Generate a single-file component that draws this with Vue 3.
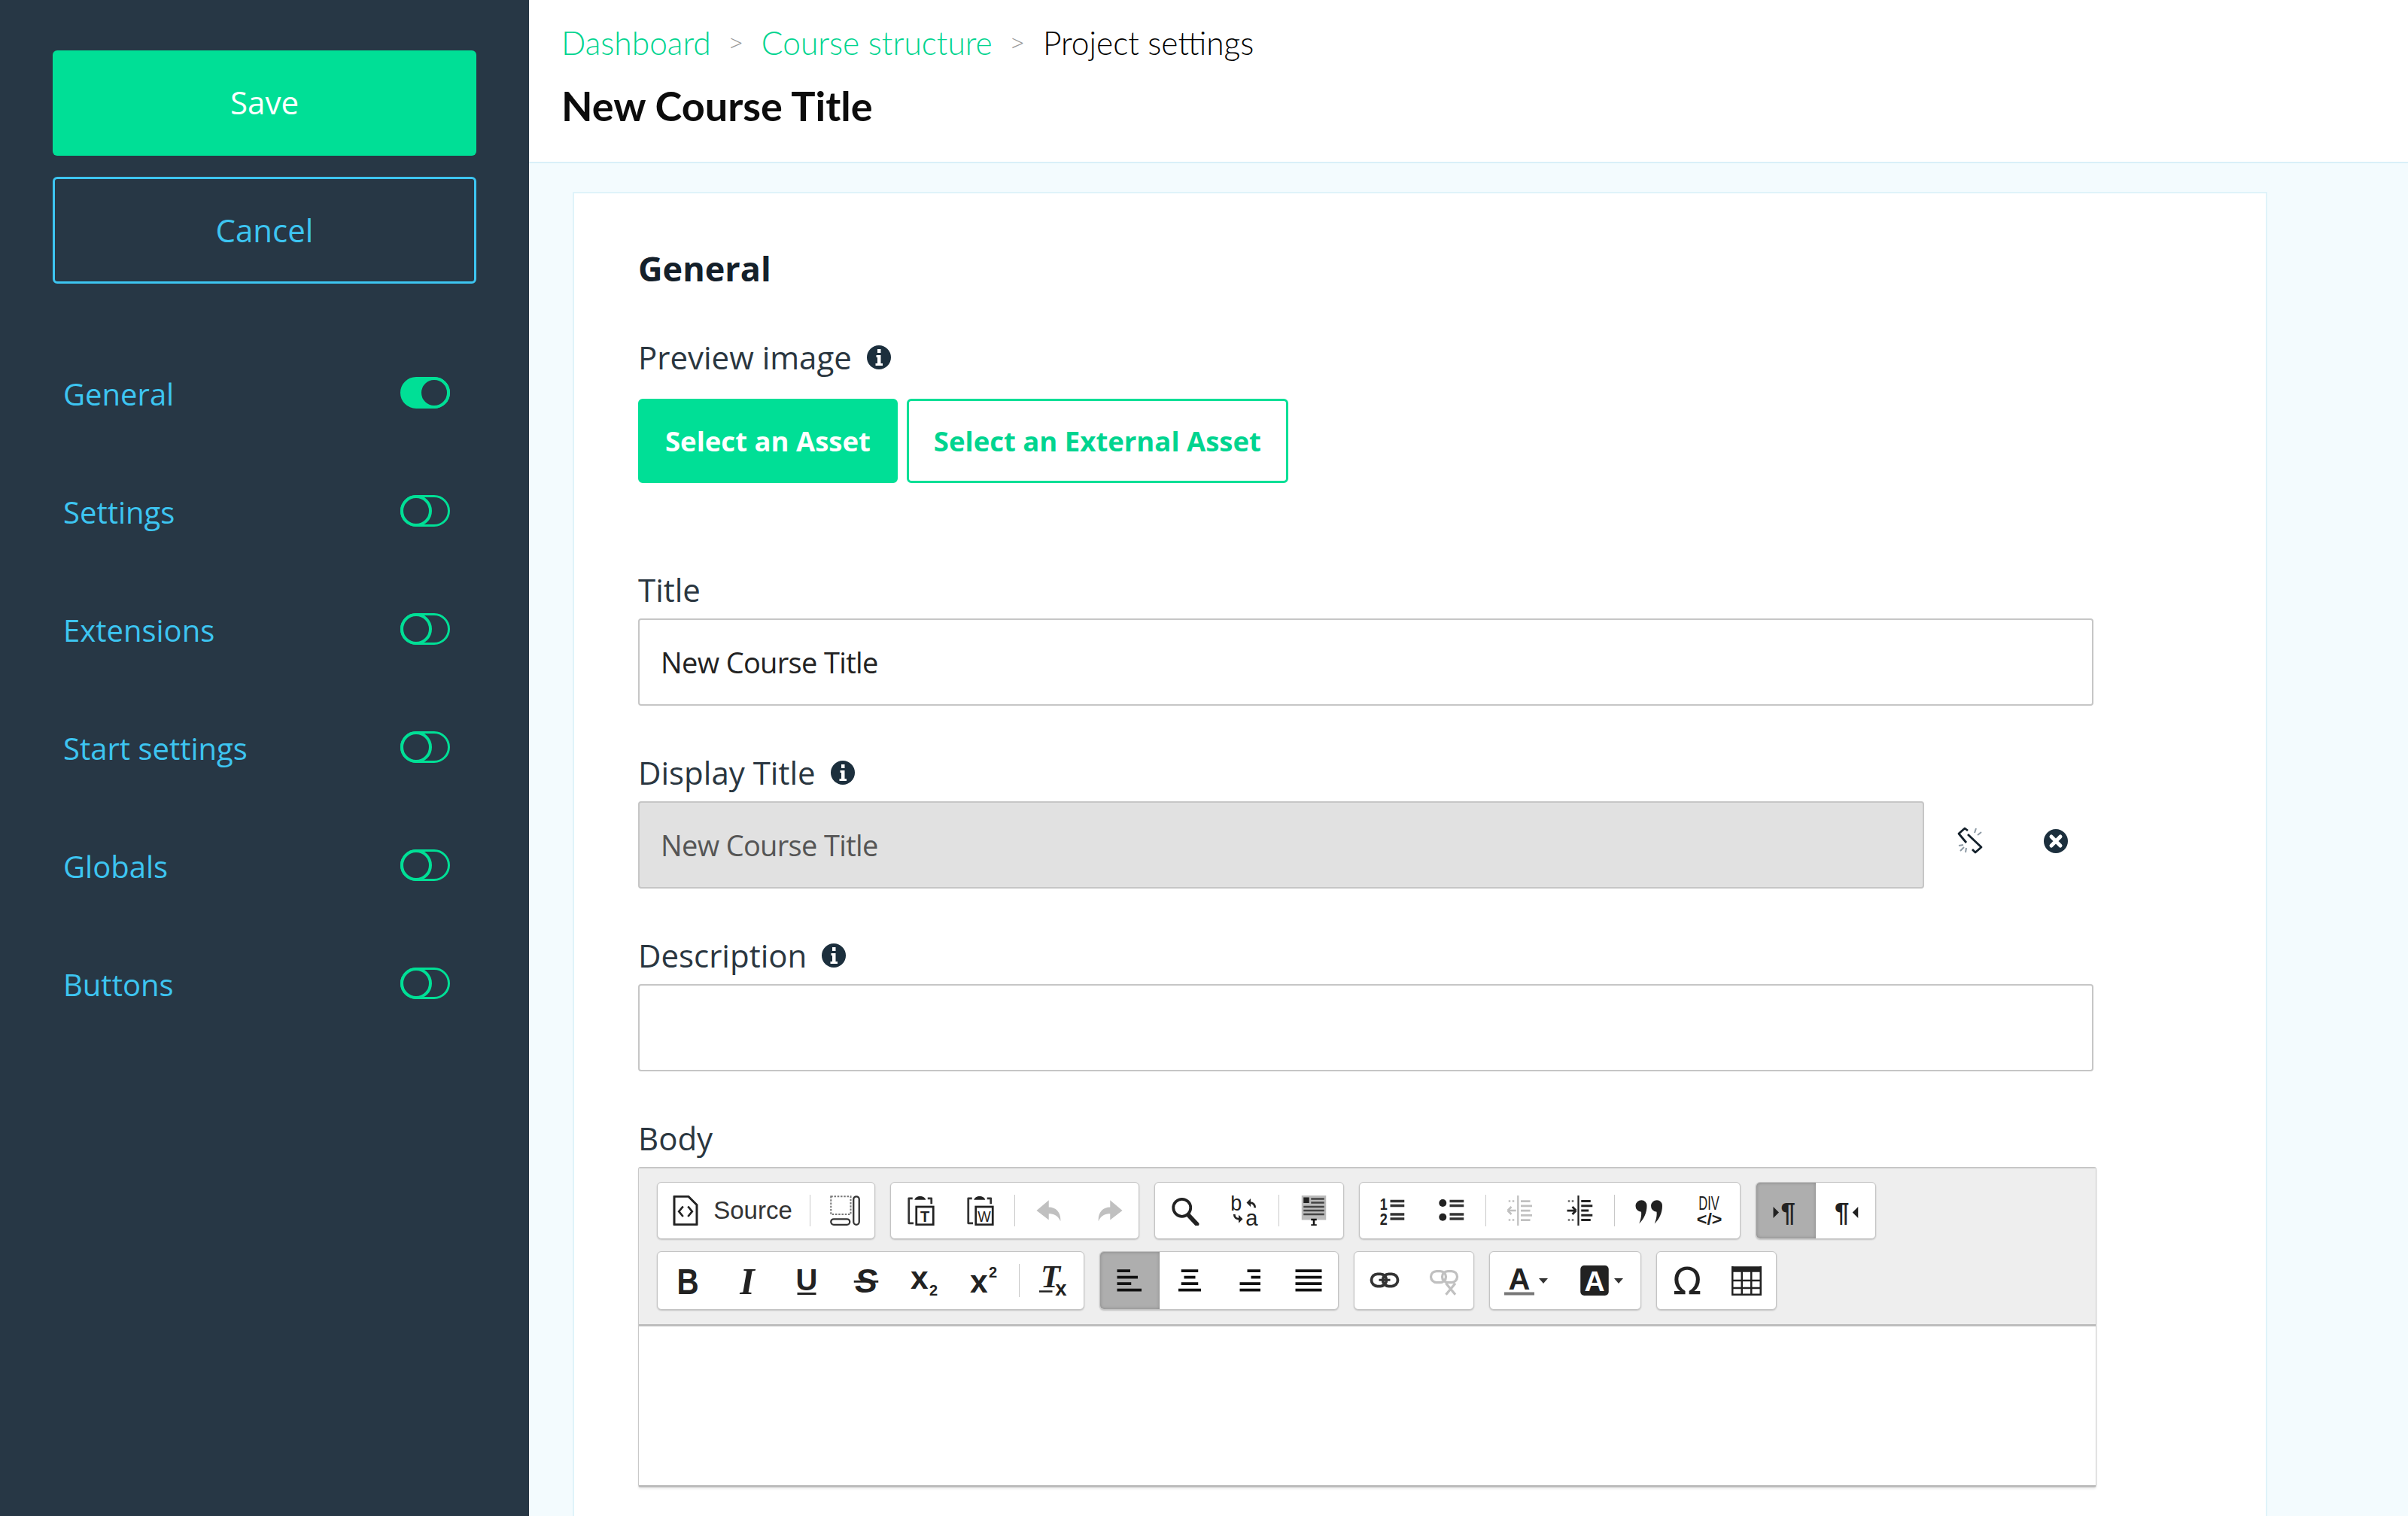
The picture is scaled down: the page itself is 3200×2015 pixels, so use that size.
<script setup>
const navItems = [
  { label: 'General', on: true },
  { label: 'Settings', on: false },
  { label: 'Extensions', on: false },
  { label: 'Start settings', on: false },
  { label: 'Globals', on: false },
  { label: 'Buttons', on: false },
];

// one row per toolbar line; '|' is a separator inside a group
const toolbar = [
  [
    { items: ['source', '|', 'maximize'] },
    { items: ['pastetext', 'pasteword', '|', 'undo', 'redo'] },
    { items: ['find', 'replace', '|', 'templates'] },
    { cls: 'group--lists', items: ['ol', 'ul', '|', 'outdent', 'indent', '|', 'quote', 'div'] },
    { items: ['ltr', 'rtl'] },
  ],
  [
    { items: ['bold', 'italic', 'underline', 'strike', 'sub', 'sup', '|', 'clear'] },
    { items: ['alignleft', 'aligncenter', 'alignright', 'justify'] },
    { items: ['link', 'unlink'] },
    { items: ['textcolor', 'bgcolor'] },
    { items: ['omega', 'table'] },
  ],
];

const activeBtns = ['alignleft', 'ltr'];
const disabledBtns = ['undo', 'redo', 'outdent', 'unlink'];
const comboBtns = ['textcolor', 'bgcolor'];

function btnClass(name) {
  return {
    btn: true,
    'btn--active': activeBtns.includes(name),
    'btn--disabled': disabledBtns.includes(name),
    'btn--combo': comboBtns.includes(name),
    'btn--source': name === 'source',
  };
}
</script>

<template>
  <div class="page">
    <svg class="sprite" aria-hidden="true">
      <symbol id="i-source" viewBox="0 0 16 16">
        <path d="M2 .5h7.500L14 5v10.500H2z" fill="none" stroke="#222" stroke-width="1.200" stroke-linejoin="round" />
        <path d="M6.700 5.800 4.500 8.500l2.200 2.700M9.300 5.800l2.200 2.700-2.200 2.700" fill="none" stroke="#222" stroke-width="1.100" />
      </symbol>
      <symbol id="i-maximize" viewBox="0 0 16 16">
        <rect x=".5" y=".5" width="10.500" height="9.500" fill="none" stroke="#777" stroke-width=".8" stroke-dasharray="1 .7" />
        <rect x="12.500" y=".5" width="3" height="15" rx="1.500" fill="none" stroke="#333" stroke-width=".9" />
        <rect x=".5" y="12.500" width="10" height="3" rx="1.500" fill="none" stroke="#333" stroke-width=".9" />
      </symbol>
      <symbol id="i-pastetext" viewBox="0 0 16 16">
        <path d="M3.500 1.500H1.500v13.200h2.500M11.500 1.500h2v3" fill="none" stroke="#333" stroke-width="1.100" stroke-linejoin="round" />
        <path d="M4.500 2.300C5-.3 10-.3 10.500 2.300z" fill="#222" />
        <rect x="5.500" y="6" width="9" height="9.500" fill="#fff" stroke="#222" stroke-width="1.100" />
        <text x="10" y="13.800" class="glyph" font-size="8" text-anchor="middle">T</text>
      </symbol>
      <symbol id="i-pasteword" viewBox="0 0 16 16">
        <path d="M3.500 1.500H1.500v13.200h2.500M11.500 1.500h2v3" fill="none" stroke="#333" stroke-width="1.100" stroke-linejoin="round" />
        <path d="M4.500 2.300C5-.3 10-.3 10.500 2.300z" fill="#222" />
        <rect x="5.500" y="6" width="9" height="9.500" fill="#fff" stroke="#222" stroke-width="1.100" />
        <text x="10" y="13.800" class="glyph glyph--thin" font-size="8" text-anchor="middle" textLength="7" lengthAdjust="spacingAndGlyphs">W</text>
      </symbol>
      <symbol id="i-undo" viewBox="0 0 16 16">
        <path d="M7.500 2.500 1 8l6.500 5V9.700c2.500 0 4.800.8 6.200 4 .4-4.500-2.200-7.500-6.200-7.500z" fill="#222" />
      </symbol>
      <symbol id="i-redo" viewBox="0 0 16 16">
        <path d="M8.500 2.500 15 8l-6.500 5V9.700c-2.500 0-4.800.8-6.200 4-.4-4.500 2.200-7.500 6.200-7.500z" fill="#222" />
      </symbol>
      <symbol id="i-find" viewBox="0 0 16 16">
        <circle cx="6.300" cy="6.500" r="4.600" fill="none" stroke="#222" stroke-width="1.500" />
        <path d="M9.600 10.300 14.200 15.200" stroke="#222" stroke-width="2.300" stroke-linecap="round" />
      </symbol>
      <symbol id="i-replace" viewBox="0 0 16 16">
        <text x=".5" y="8" class="glyph glyph--thin" font-size="12" textLength="6" lengthAdjust="spacingAndGlyphs">b</text>
        <text x="8.500" y="16" class="glyph glyph--thin" font-size="12" textLength="6.500" lengthAdjust="spacingAndGlyphs">a</text>
        <path d="M13.500 6.500c0-1.500-1-2.700-2.500-2.700M2.500 10c0 1.500 1 2.500 2.500 2.500" fill="none" stroke="#222" stroke-width="1.100" />
        <path d="M11.200 1.600 9 3.800l2.200 2.200zM4.800 10.300 7 12.500l-2.200 2.200z" fill="#222" />
      </symbol>
      <symbol id="i-templates" viewBox="0 0 16 16">
        <rect x="1.500" y="0" width="13" height="13" fill="#bbb" />
        <rect x="2.500" y="1" width="3" height="3" fill="#222" />
        <path d="M6.500 1.800h7M6.500 3.800h7M2.500 6h11M2.500 8h11M2.500 10h11" stroke="#444" stroke-width="1" />
        <path d="M6.500 12.800h3M6.500 15.800h3M8 12.800v3" stroke="#111" stroke-width="1" />
      </symbol>
      <symbol id="i-ol" viewBox="0 0 16 16">
        <text x="1.500" y="7.500" class="glyph" font-size="9" textLength="4" lengthAdjust="spacingAndGlyphs">1</text>
        <text x="1.500" y="15.500" class="glyph" font-size="9" textLength="4" lengthAdjust="spacingAndGlyphs">2</text>
        <path d="M7 3h7.500M7 5.400h7.500M7 10h7.500M7 12.400h7.500" stroke="#333" stroke-width="1.400" />
      </symbol>
      <symbol id="i-ul" viewBox="0 0 16 16">
        <circle cx="3.300" cy="4" r="2" fill="#222" />
        <circle cx="3.300" cy="11.500" r="2" fill="#222" />
        <path d="M7 3h7.500M7 5.400h7.500M7 10h7.500M7 12.400h7.500" stroke="#333" stroke-width="1.400" />
      </symbol>
      <symbol id="i-outdent" viewBox="0 0 16 16">
        <path d="M6.500 0v16" stroke="#222" stroke-width=".9" />
        <path d="M1 8h4.500M1 8l2-2M1 8l2 2" fill="none" stroke="#222" stroke-width="1" />
        <path d="M8 3h5M8 5.500h6M8 8h5M8 10.500h6M8 13h5" stroke="#222" stroke-width="1.100" />
        <path d="M1.500 3h3M1.500 13h3" stroke="#222" stroke-width="1" stroke-dasharray="1 1" />
      </symbol>
      <symbol id="i-indent" viewBox="0 0 16 16">
        <path d="M7 0v16" stroke="#222" stroke-width=".9" />
        <path d="M1 8h4.800M5.800 8l-2-2M5.800 8l-2 2" fill="none" stroke="#222" stroke-width="1.100" />
        <path d="M8.500 3h5M8.500 5.500h6M8.500 8h4M8.500 10.500h6M8.500 13h5" stroke="#222" stroke-width="1.200" />
        <path d="M1.500 3h3M1.500 13h3" stroke="#666" stroke-width="1" stroke-dasharray="1 1" />
      </symbol>
      <symbol id="i-quote" viewBox="0 0 16 16">
        <path d="M3.800 2.500a2.800 2.800 0 0 1 2.800 3c0 3.800-1.600 7-4.100 9.500 1-2.800 1.300-4.500 1.100-6.300A2.900 2.900 0 0 1 3.800 2.500z" fill="#222" />
        <path d="M12 2.500a2.800 2.800 0 0 1 2.800 3c0 3.800-1.600 7-4.100 9.500 1-2.800 1.300-4.500 1.100-6.300A2.900 2.900 0 0 1 12 2.500z" fill="#222" />
      </symbol>
      <symbol id="i-div" viewBox="0 0 16 16">
        <text x="2.500" y="7.500" class="glyph glyph--thin" font-size="10" textLength="11" lengthAdjust="spacingAndGlyphs">DIV</text>
        <text x="1.500" y="15.500" class="glyph" font-size="8.500" textLength="13.500" lengthAdjust="spacingAndGlyphs">&lt;/&gt;</text>
      </symbol>
      <symbol id="i-ltr" viewBox="0 0 16 16">
        <path d="M1 6l3 3-3 3z" fill="#222" />
        <text x="5" y="13.500" class="glyph" font-size="14">¶</text>
      </symbol>
      <symbol id="i-rtl" viewBox="0 0 16 16">
        <text x="2" y="13.500" class="glyph" font-size="14">¶</text>
        <path d="M14.500 6l-3 3 3 3z" fill="#222" />
      </symbol>
      <symbol id="i-bold" viewBox="0 0 16 16">
        <text x="8" y="15" class="glyph" font-size="19" text-anchor="middle" transform="translate(1.200 0) scale(.85 1)">B</text>
      </symbol>
      <symbol id="i-italic" viewBox="0 0 16 16">
        <text x="8" y="15" class="glyph glyph--serif" font-size="20" text-anchor="middle">I</text>
      </symbol>
      <symbol id="i-underline" viewBox="0 0 16 16">
        <text x="8" y="13" class="glyph" font-size="16" text-anchor="middle">U</text>
        <path d="M3 15h10" stroke="#222" stroke-width="1.200" />
      </symbol>
      <symbol id="i-strike" viewBox="0 0 16 16">
        <text x="8" y="14.500" class="glyph" font-size="18" text-anchor="middle" font-style="italic">S</text>
        <path d="M1.500 8.500h13" stroke="#222" stroke-width="1.100" />
      </symbol>
      <symbol id="i-sub" viewBox="0 0 16 16">
        <text x="0" y="12.500" class="glyph" font-size="17">x</text>
        <text x="10" y="16" class="glyph" font-size="8">2</text>
      </symbol>
      <symbol id="i-sup" viewBox="0 0 16 16">
        <text x="0" y="14.500" class="glyph" font-size="17">x</text>
        <text x="10" y="6.500" class="glyph" font-size="8">2</text>
      </symbol>
      <symbol id="i-clear" viewBox="0 0 16 16">
        <text x="6" y="11.500" class="glyph glyph--serif" font-size="17" text-anchor="middle">T</text>
        <path d="M0 13.800h7" stroke="#222" stroke-width="1" />
        <text x="8.500" y="16" class="glyph" font-size="11">x</text>
      </symbol>
      <symbol id="i-alignleft" viewBox="0 0 16 16">
        <path d="M1 2.800h7M1 6.200h11M1 9.600h7.500M1 13h13" stroke="#111" stroke-width="1.500" />
      </symbol>
      <symbol id="i-aligncenter" viewBox="0 0 16 16">
        <path d="M3.500 2.800h9M5 6.200h6M3.500 9.600h9M2 13h12" stroke="#111" stroke-width="1.500" />
      </symbol>
      <symbol id="i-alignright" viewBox="0 0 16 16">
        <path d="M7 2.800h7M9 6.200h5M3 9.600h11M3 13h11" stroke="#111" stroke-width="1.500" />
      </symbol>
      <symbol id="i-justify" viewBox="0 0 16 16">
        <path d="M1 2.800h14M1 6.200h14M1 9.600h14M1 13h14" stroke="#111" stroke-width="1.500" />
      </symbol>
      <symbol id="i-link" viewBox="0 0 16 16">
        <rect x="1" y="4.500" width="8" height="6.500" rx="3.200" fill="none" stroke="#333" stroke-width="1.500" />
        <rect x="7" y="4.500" width="8" height="6.500" rx="3.200" fill="none" stroke="#333" stroke-width="1.500" />
        <path d="M5 7.700h6" stroke="#333" stroke-width="1.200" />
      </symbol>
      <symbol id="i-unlink" viewBox="0 0 16 16">
        <rect x="1" y="3" width="8" height="6" rx="3" fill="none" stroke="#222" stroke-width="1.300" />
        <rect x="7" y="3" width="8" height="6" rx="3" fill="none" stroke="#222" stroke-width="1.300" />
        <path d="M9 9.500l5 6M14 9.500l-5 6" stroke="#222" stroke-width="1.300" />
      </symbol>
      <symbol id="i-textcolor" viewBox="0 0 16 16">
        <text x="8" y="12.800" class="glyph" font-size="16" text-anchor="middle">A</text>
        <rect x="0" y="14.200" width="16" height="1.600" fill="#777" />
      </symbol>
      <symbol id="i-bgcolor" viewBox="0 0 16 16">
        <rect x=".5" y="0" width="15" height="16" rx="2" fill="#222" />
        <text x="8" y="13.500" class="glyph glyph--white" font-size="15" text-anchor="middle">A</text>
      </symbol>
      <symbol id="i-omega" viewBox="0 0 16 16">
        <text x="8" y="15" class="glyph glyph--reg" font-size="20" text-anchor="middle">Ω</text>
      </symbol>
      <symbol id="i-table" viewBox="0 0 16 16">
        <rect x="0" y=".5" width="16" height="3" fill="#222" />
        <path d="M.5.500v15h15V.5M5.500 3v12.500M10.500 3v12.500M0 8h16M0 12h16" fill="none" stroke="#222" stroke-width="1" />
      </symbol>
    </svg>

    <aside class="sidebar">
      <button class="side-btn side-btn--save">Save</button>
      <button class="side-btn side-btn--cancel">Cancel</button>
      <nav class="side-nav">
        <div v-for="item in navItems" :key="item.label" class="side-nav__item">
          <span>{{ item.label }}</span>
          <span class="toggle" :class="{ 'toggle--on': item.on }"></span>
        </div>
      </nav>
    </aside>

    <main class="main">
      <header class="topbar">
        <div class="crumbs">
          <a>Dashboard</a><i>&gt;</i><a>Course structure</a><i>&gt;</i><span>Project settings</span>
        </div>
        <h1 class="topbar__title">New Course Title</h1>
      </header>

      <section class="card">
        <h2 class="card__title">General</h2>

        <div class="label label--preview">Preview image
          <svg class="info" viewBox="0 0 32 32"><circle cx="16" cy="16" r="16" fill="#1c2f3d" /><path d="M12.500 13h6v11h2.500v3H11.500v-3h2.500v-8h-1.500zM14 5h4.500v5H14z" fill="#fff" /></svg>
        </div>
        <div class="asset-btns">
          <button class="asset-btn asset-btn--solid">Select an Asset</button>
          <button class="asset-btn">Select an External Asset</button>
        </div>

        <div class="field field--first">
          <div class="label">Title</div>
          <div class="input">New Course Title</div>
        </div>

        <div class="field">
          <div class="label">Display Title
            <svg class="info" viewBox="0 0 32 32"><circle cx="16" cy="16" r="16" fill="#1c2f3d" /><path d="M12.500 13h6v11h2.500v3H11.500v-3h2.500v-8h-1.500zM14 5h4.500v5H14z" fill="#fff" /></svg>
          </div>
          <div class="input-row">
            <div class="input input--disabled">New Course Title</div>
            <svg class="row-icon row-icon--unlink" viewBox="0 0 36 36">
              <path d="M15 5 11 2 3 9 13 21" fill="none" stroke="#13202b" stroke-width="2.800" stroke-linejoin="round" />
              <path d="M15 10 33 27 25 34 21 30" fill="none" stroke="#13202b" stroke-width="2.800" stroke-linejoin="round" />
              <path d="M26 2l-2 6M33 7l-5 4M3 25l6-1M12 34l1-6M5 32l5-5" stroke="#8c99a4" stroke-width="2" />
            </svg>
            <svg class="row-icon row-icon--close" viewBox="0 0 32 32">
              <circle cx="16" cy="16" r="16" fill="#1c2f3d" />
              <path d="M10 10l12 12M22 10 10 22" stroke="#fff" stroke-width="5" stroke-linecap="round" />
            </svg>
          </div>
        </div>

        <div class="field">
          <div class="label">Description
            <svg class="info" viewBox="0 0 32 32"><circle cx="16" cy="16" r="16" fill="#1c2f3d" /><path d="M12.500 13h6v11h2.500v3H11.500v-3h2.500v-8h-1.500zM14 5h4.500v5H14z" fill="#fff" /></svg>
          </div>
          <div class="input"></div>
        </div>

        <div class="field">
          <div class="label">Body</div>
          <div class="editor">
            <div class="toolbar">
              <div v-for="(row, r) in toolbar" :key="r" class="toolbar__row">
                <div v-for="(group, g) in row" :key="g" class="group" :class="group.cls">
                  <template v-for="(name, n) in group.items" :key="n">
                    <span v-if="name === '|'" class="sep"></span>
                    <span v-else :class="btnClass(name)">
                      <svg class="ico"><use :href="'#i-' + name" /></svg>
                      <span v-if="name === 'source'" class="btn__text">Source</span>
                      <span v-if="comboBtns.includes(name)" class="btn__arrow"></span>
                    </span>
                  </template>
                </div>
              </div>
            </div>
            <div class="editor__body"></div>
          </div>
        </div>
      </section>
    </main>
  </div>
</template>

<style scoped>
.page {
  display: flex;
  width: 3200px;
  height: 2015px;
  overflow: hidden;
  font-family: "Open Sans", "Liberation Sans", sans-serif;
  color: #1f2a33;
  background: #f3fbfe;
}

.sprite {
  display: none;
}

.sidebar {
  flex: 0 0 703px;
  box-sizing: border-box;
  padding: 67px 70px 0;
  background: #273745;
}

.side-btn {
  display: block;
  box-sizing: border-box;
  width: 563px;
  padding: 0 0 3px;
  font-family: inherit;
  font-size: 42px;
  border-radius: 6px;
}

.side-btn--save {
  height: 140px;
  color: #fff;
  background: #00df96;
  border: 0;
}

.side-btn--cancel {
  height: 142px;
  margin-top: 28px;
  padding-bottom: 1px;
  color: #3dc5f1;
  background: transparent;
  border: 3px solid #3dc5f1;
}

.side-nav {
  margin-top: 69px;
}

.side-nav__item {
  display: flex;
  align-items: center;
  justify-content: space-between;
  box-sizing: border-box;
  height: 157px;
  padding: 0 35px 3px 14px;
  font-size: 40px;
  color: #3dc5f1;
}

.toggle {
  position: relative;
  box-sizing: border-box;
  width: 66px;
  height: 42px;
  margin-top: -3px;
  border: 3px solid #00df96;
  border-radius: 21px;
}

.toggle::after {
  content: "";
  position: absolute;
  top: -3px;
  left: -3px;
  box-sizing: border-box;
  width: 42px;
  height: 42px;
  background: #273745;
  border: 4px solid #00df96;
  border-radius: 50%;
}

.toggle--on {
  background: #00df96;
}

.toggle--on::after {
  left: auto;
  right: -3px;
}

.main {
  flex: 1;
  min-width: 0;
}

.topbar {
  box-sizing: border-box;
  height: 217px;
  padding: 26px 43px 0;
  background: #fff;
  border-bottom: 2px solid #d9f0f9;
}

.crumbs {
  display: flex;
  align-items: center;
  height: 60px;
  font-family: Lato, "Open Sans", sans-serif;
  font-size: 42.5px;
  font-weight: 300;
  color: #000;
}

.crumbs a {
  color: #00d48f;
}

.crumbs i {
  padding: 0 25px;
  font-family: "Open Sans", sans-serif;
  font-size: 30px;
  font-style: normal;
  color: #999;
}

.topbar__title {
  margin: 23px 0 0;
  font-family: Lato, "Open Sans", sans-serif;
  font-size: 54px;
  font-weight: 700;
  line-height: 64px;
  color: #0c0c0c;
}

.card {
  box-sizing: border-box;
  width: 2252px;
  height: 1800px;
  margin: 38px 0 0 58px;
  padding: 70px 85px 0;
  background: #fff;
  border: 2px solid #dff3fa;
}

.card__title {
  margin: 0;
  font-size: 45px;
  font-weight: 700;
  line-height: 60px;
  color: #14202a;
}

.label {
  display: flex;
  align-items: center;
  gap: 20px;
  font-size: 42px;
  line-height: 60px;
  color: #2a3640;
}

.label--preview {
  margin-top: 58px;
}

.info {
  width: 32px;
  height: 32px;
}

.asset-btns {
  display: flex;
  gap: 12px;
  margin-top: 25px;
}

.asset-btn {
  box-sizing: border-box;
  height: 112px;
  padding: 0 33px;
  font-family: inherit;
  font-size: 36.5px;
  font-weight: 700;
  color: #00d48f;
  background: #fff;
  border: 3px solid #00df96;
  border-radius: 6px;
}

.asset-btn--solid {
  color: #fff;
  background: #00df96;
}

.field {
  width: 1938px;
  margin-bottom: 59px;
}

.field--first {
  margin-top: 112px;
}

.field .label {
  margin-bottom: 8px;
}

.input {
  box-sizing: border-box;
  width: 1934px;
  height: 116px;
  padding: 0 28px;
  font-size: 38px;
  letter-spacing: -.66px;
  line-height: 112px;
  color: #222;
  background: #fff;
  border: 2px solid #c6c6c6;
  border-radius: 4px;
}

.input-row {
  display: flex;
  align-items: center;
}

.input--disabled {
  width: 1709px;
  color: #555;
  background: #e1e1e1;
}

.row-icon--unlink {
  width: 36px;
  height: 36px;
  margin: -12px 0 0 43px;
}

.row-icon--close {
  width: 32px;
  height: 32px;
  margin: -10px 0 0 80px;
}

.editor {
  box-sizing: border-box;
  height: 426px;
  border: 1px solid #c9c9c9;
  border-top: 2px solid #c6c6c6;
  border-bottom: 3px solid #bcbcbc;
  border-radius: 3px;
  box-shadow: 0 2px 3px rgba(0, 0, 0, .08);
}

.toolbar {
  display: flex;
  flex-direction: column;
  gap: 16px;
  box-sizing: border-box;
  height: 210px;
  padding: 18px 24px 0;
  background: #eee;
  border-bottom: 3px solid #bdbdbd;
}

.toolbar__row {
  display: flex;
  gap: 20px;
}

.group {
  display: flex;
  align-items: stretch;
  box-sizing: content-box;
  height: 74px;
  background: #fff;
  border: 1px solid #c4c4c4;
  border-radius: 6px;
  box-shadow: 0 1px 2px rgba(0, 0, 0, .2);
}

.toolbar__row + .toolbar__row .group {
  height: 76px;
}

.group--lists {
  padding: 0 2px 0 3px;
}

.btn {
  display: flex;
  align-items: center;
  justify-content: center;
  width: 79px;
  flex: none;
}

.btn--active {
  background: #aeaeae;
  box-shadow: inset 0 0 4px rgba(0, 0, 0, .25);
}

.group > .btn--active:first-child {
  border-radius: 5px 0 0 5px;
}

.btn--disabled .ico {
  opacity: .28;
}

.btn--source {
  width: 196px;
  gap: 17px;
}

.btn__text {
  font-family: "Liberation Sans", Arial, sans-serif;
  font-size: 33px;
  color: #333;
}

.btn--combo {
  width: 100px;
  justify-content: flex-start;
  padding-left: 19px;
  box-sizing: border-box;
  gap: 6px;
}

.btn__arrow {
  width: 0;
  height: 0;
  border-top: 7px solid #333;
  border-left: 6px solid transparent;
  border-right: 6px solid transparent;
}

.ico {
  flex: none;
  width: 40px;
  height: 40px;
}

.sep {
  flex: none;
  width: 1px;
  margin: 16px 6px;
  background: #c8c8c8;
}

.editor__body {
  height: 210px;
  background: #fff;
}
</style>

<style>
.glyph {
  font-family: "Liberation Sans", Arial, sans-serif;
  font-weight: 700;
  fill: #222;
}

.glyph--thin {
  font-weight: 400;
}

.glyph--serif {
  font-family: "Liberation Serif", serif;
  font-style: italic;
}

.glyph--white {
  fill: #fff;
}

.glyph--reg {
  font-family: "DejaVu Sans", sans-serif;
  font-weight: 400;
}
</style>
